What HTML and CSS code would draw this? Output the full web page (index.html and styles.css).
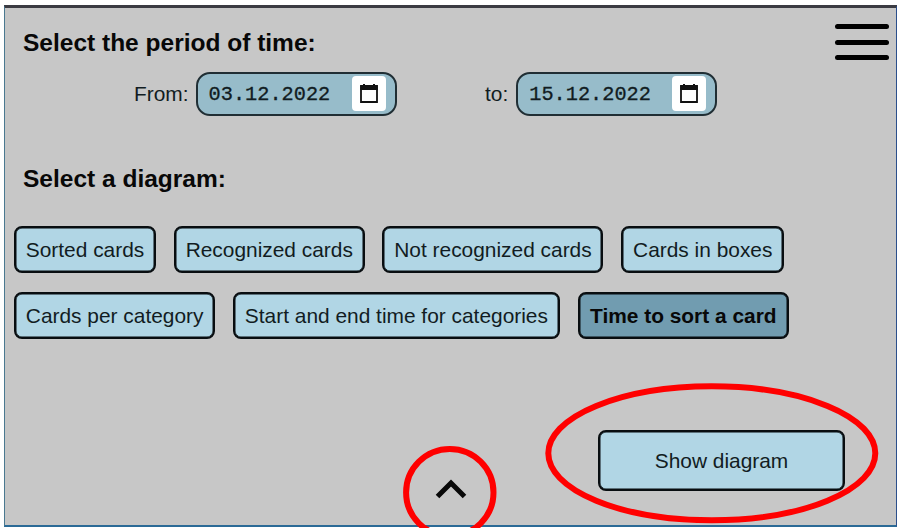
FILE: index.html
```
<!DOCTYPE html>
<html lang="en">
<head>
<meta charset="utf-8">
<title>Diagrams</title>
<link rel="stylesheet" href="styles.css">
</head>
<body>
<main class="panel">
  <header class="top">
    <h2 class="heading">Select the period of time:</h2>
    <div class="menu"><span></span><span></span><span></span></div>
  </header>
  <section class="period">
    <div class="field from">
      <span class="label">From:</span>
      <div class="date"><span class="value">03.12.2022</span>
        <span class="picker"><svg width="18" height="19" viewBox="0 0 18 19"><path d="M1 2H17V18H1Z" fill="none" stroke="#111" stroke-width="1.8"/><path d="M.3 1.5H17.7V6H.3ZM3 0H5V2H3ZM13 0H15V2H13Z" fill="#111"/></svg></span>
      </div>
    </div>
    <div class="field">
      <span class="label">to:</span>
      <div class="date"><span class="value">15.12.2022</span>
        <span class="picker"><svg width="18" height="19" viewBox="0 0 18 19"><path d="M1 2H17V18H1Z" fill="none" stroke="#111" stroke-width="1.8"/><path d="M.3 1.5H17.7V6H.3ZM3 0H5V2H3ZM13 0H15V2H13Z" fill="#111"/></svg></span>
      </div>
    </div>
  </section>
  <h2 class="heading second">Select a diagram:</h2>
  <section class="choices">
    <div class="row">
      <button>Sorted cards</button>
      <button>Recognized cards</button>
      <button>Not recognized cards</button>
      <button>Cards in boxes</button>
    </div>
    <div class="row">
      <button>Cards per category</button>
      <button>Start and end time for categories</button>
      <button class="active">Time to sort a card</button>
    </div>
  </section>
  <footer class="bottom">
    <svg class="chevron" width="32" height="20" viewBox="0 0 32 20"><path d="M2.5 17.5L16 4L29.5 17.5" fill="none" stroke="#080808" stroke-width="5"/></svg>
    <button class="show">Show diagram</button>
  </footer>
</main>
<svg class="marks" width="898" height="528" viewBox="0 0 898 528"><g fill="none" stroke="#f00" stroke-width="6"><ellipse cx="711.8" cy="453.3" rx="163.5" ry="67"/><ellipse cx="449.8" cy="492.5" rx="43.7" ry="43.5"/></g></svg>
</body>
</html>
```
FILE: styles.css
```
* { box-sizing: border-box; }
body {
  margin: 0;
  width: 898px;
  height: 528px;
  padding: 5px 1px 1px 4px;
  background: #fff;
  overflow: hidden;
  font-family: "Liberation Sans", Arial, sans-serif;
  font-size: 20.9px;
  color: #111c22;
}
.panel {
  height: 522px;
  width: 893px;
  background: #c7c7c7;
  border-top: 3px solid #3b3b42;
  border-left: 1px solid #4a7890;
  border-right: 1px solid #2b4f8c;
  border-bottom: 2px solid #2b6a96;
}
.top {
  display: flex;
  justify-content: space-between;
  height: 64px;
  padding: 16px 7px 0 18px;
}
.heading {
  margin: 0;
  font-size: 24.5px;
  line-height: 38px;
  color: #080808;
  white-space: nowrap;
}
.menu {
  display: flex;
  flex-direction: column;
  justify-content: space-between;
  width: 54px;
  height: 36px;
}
.menu span { height: 5px; border-radius: 3px; background: #000; }
.period { display: flex; height: 43px; padding-left: 129px; gap: 87px; }
.field { display: flex; align-items: center; gap: 8px; }
.from { width: 264px; gap: 7px; }
.label { line-height: 24px; }
.date {
  display: flex;
  align-items: center;
  justify-content: space-between;
  width: 201px;
  height: 44px;
  padding: 0 9px 0 11px;
  border: 2px solid #202e34;
  border-radius: 14px;
  background: #97bcca;
}
.value {
  font-family: "Liberation Mono", monospace;
  font-size: 20.3px;
  line-height: 24px;
  padding-top: 2px;
  -webkit-text-stroke: 0.3px #111c22;
}
.picker {
  display: flex;
  align-items: center;
  justify-content: center;
  width: 34px;
  height: 35px;
  border-radius: 4px;
  background: #fff;
}
.second { margin: 45px 0 0 18px; }
.choices { display: flex; flex-direction: column; gap: 19px; padding: 28px 0 0 9px; }
.row { display: flex; gap: 17.8px; }
button {
  height: 47px;
  padding: 0 9.8px;
  border: 2px solid #080d10;
  box-shadow: inset 0 0 0 0.5px #080d10;
  border-radius: 8px;
  background: #b1d6e5;
  font: inherit;
  color: inherit;
  white-space: nowrap;
}
.active { padding: 0 10.5px; background: #719cb0; color: #080808; font-weight: bold; }
.bottom {
  display: flex;
  justify-content: space-between;
  align-items: flex-start;
  margin: 91px 51px 0 430px;
}
.chevron { margin-top: 49px; }
.show { width: 247px; height: 61px; }
.marks { position: absolute; left: 0; top: 0; }
```
